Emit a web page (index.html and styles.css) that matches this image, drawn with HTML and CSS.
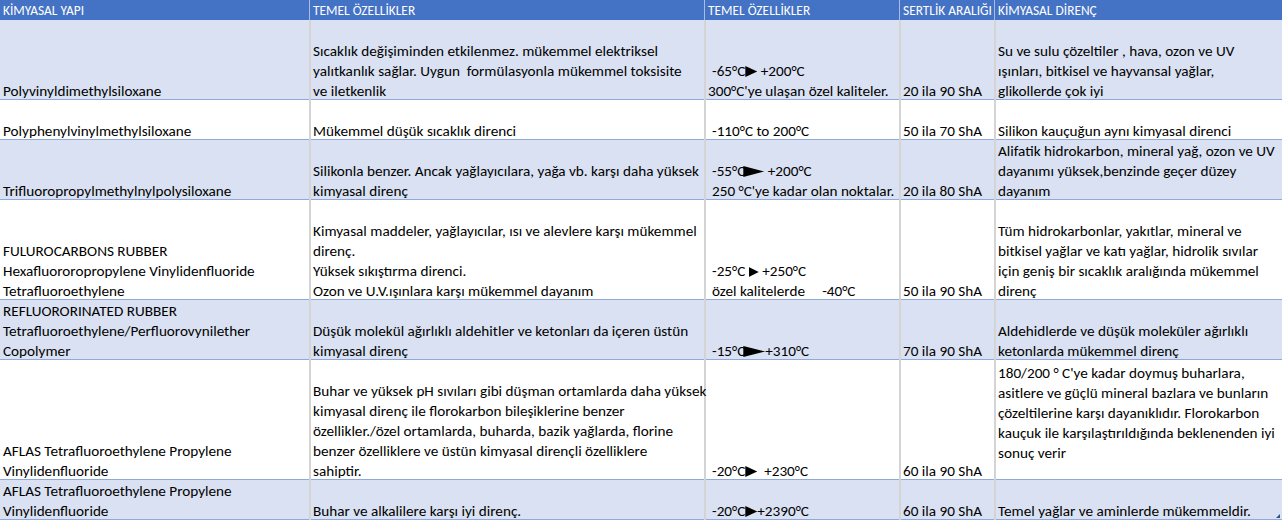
FILE: index.html
```html
<!DOCTYPE html>
<html lang="tr">
<head>
<meta charset="utf-8">
<title>Kimyasal Yapı</title>
<link rel="stylesheet" href="styles.css">
</head>
<body>
<div class="sheet">
  <div class="row head">
    <div class="cell c1">KİMYASAL YAPI</div>
    <div class="cell">TEMEL ÖZELLİKLER</div>
    <div class="cell">TEMEL ÖZELLİKLER</div>
    <div class="cell">SERTLİK ARALIĞI</div>
    <div class="cell last">KİMYASAL DİRENÇ</div>
  </div>

  <div class="row alt h4">
    <div class="cell c1">Polyvinyldimethylsiloxane</div>
    <div class="cell">Sıcaklık değişiminden etkilenmez. mükemmel elektriksel<br>yalıtkanlık sağlar. Uygun  formülasyonla mükemmel toksisite<br>ve iletkenlik</div>
    <div class="cell"><span><span class="sp"></span>-65°C<span class="arr"></span> +200°C</span><span>300°C'ye ulaşan özel kaliteler.</span></div>
    <div class="cell">20 ila 90 ShA</div>
    <div class="cell last">Su ve sulu çözeltiler , hava, ozon ve UV<br>ışınları, bitkisel ve hayvansal yağlar,<br>glikollerde çok iyi</div>
  </div>

  <div class="row h2">
    <div class="cell c1">Polyphenylvinylmethylsiloxane</div>
    <div class="cell">Mükemmel düşük sıcaklık direnci</div>
    <div class="cell"><span><span class="sp"></span>-110°C to 200°C</span></div>
    <div class="cell">50 ila 70 ShA</div>
    <div class="cell last">Silikon kauçuğun aynı kimyasal direnci</div>
  </div>

  <div class="row alt h3">
    <div class="cell c1">Trifluoropropylmethylnylpolysiloxane</div>
    <div class="cell">Silikonla benzer. Ancak yağlayıcılara, yağa vb. karşı daha yüksek<br>kimyasal direnç</div>
    <div class="cell"><span><span class="sp"></span>-55°C<span class="arr wide"></span> +200°C</span><span><span class="sp"></span>250 °C'ye kadar olan noktalar.</span></div>
    <div class="cell">20 ila 80 ShA</div>
    <div class="cell last">Alifatik hidrokarbon, mineral yağ, ozon ve UV<br>dayanımı yüksek,benzinde geçer düzey<br>dayanım</div>
  </div>

  <div class="row h5">
    <div class="cell c1">FULUROCARBONS RUBBER<br>Hexafluororopropylene Vinylidenfluoride<br>Tetrafluoroethylene</div>
    <div class="cell">Kimyasal maddeler, yağlayıcılar, ısı ve alevlere karşı mükemmel<br>direnç.<br>Yüksek sıkıştırma direnci.<br>Ozon ve U.V.ışınlara karşı mükemmel dayanım</div>
    <div class="cell"><span><span class="sp"></span>-25°C <span class="arr small"></span> +250°C</span><span><span class="sp"></span>özel kalitelerde     -40°C</span></div>
    <div class="cell">50 ila 90 ShA</div>
    <div class="cell last">Tüm hidrokarbonlar, yakıtlar, mineral ve<br>bitkisel yağlar ve katı yağlar, hidrolik sıvılar<br>için geniş bir sıcaklık aralığında mükemmel<br>direnç</div>
  </div>

  <div class="row alt h3">
    <div class="cell c1">REFLUORORINATED RUBBER<br>Tetrafluoroethylene/Perfluorovynilether<br>Copolymer</div>
    <div class="cell">Düşük molekül ağırlıklı aldehitler ve ketonları da içeren üstün<br>kimyasal direnç</div>
    <div class="cell"><span><span class="sp"></span>-15°C<span class="arr over"></span>+310°C</span></div>
    <div class="cell">70 ila 90 ShA</div>
    <div class="cell last">Aldehidlerde ve düşük moleküler ağırlıklı<br>ketonlarda mükemmel direnç</div>
  </div>

  <div class="row h6">
    <div class="cell c1">AFLAS Tetrafluoroethylene Propylene<br>Vinylidenfluoride</div>
    <div class="cell">Buhar ve yüksek pH sıvıları gibi düşman ortamlarda daha yüksek<br>kimyasal direnç ile florokarbon bileşiklerine benzer<br>özellikler./özel ortamlarda, buharda, bazik yağlarda, florine<br>benzer özelliklere ve üstün kimyasal dirençli özelliklere<br>sahiptir.</div>
    <div class="cell"><span><span class="sp"></span>-20°C<span class="arr"></span>  +230°C</span></div>
    <div class="cell">60 ila 90 ShA</div>
    <div class="cell last top">180/200 ° C'ye kadar doymuş buharlara,<br>asitlere ve güçlü mineral bazlara ve bunların<br>çözeltilerine karşı dayanıklıdır. Florokarbon<br>kauçuk ile karşılaştırıldığında beklenenden iyi<br>sonuç verir</div>
  </div>

  <div class="row alt h2 end">
    <div class="cell c1">AFLAS Tetrafluoroethylene Propylene<br>Vinylidenfluoride</div>
    <div class="cell">Buhar ve alkalilere karşı iyi direnç.</div>
    <div class="cell"><span><span class="sp"></span>-20°C<span class="arr"></span>+2390°C</span></div>
    <div class="cell">60 ila 90 ShA</div>
    <div class="cell last">Temel yağlar ve aminlerde mükemmeldir.</div>
  </div>
</div>
</body>
</html>
```
FILE: styles.css
```css
html, body {
  margin: 0;
  padding: 0;
  background: #ffffff;
}

body {
  font-family: Carlito, Calibri, "Liberation Sans", sans-serif;
  font-size: 15.2px;
  color: #000000;
}

.sheet {
  width: 1282px;
  display: flex;
  flex-direction: column;
}

.row {
  display: grid;
  grid-template-columns: 311px 395px 195px 95px 1fr;
  box-sizing: border-box;
  border-bottom: 1px solid #8ea9db;
  background: #ffffff;
  position: relative;
}

.row.alt { background: #d9e1f2; }

.row.h2 { height: 40px; }
.row.h3 { height: 60px; }
.row.h4 { height: 80px; }
.row.h5 { height: 100px; }
.row.h6 { height: 120px; }

.cell {
  display: flex;
  flex-direction: column;
  justify-content: flex-end;
  box-sizing: border-box;
  padding: 0 1px 0 2px;
  margin-bottom: -2px;
  border-right: 2px solid #d4d4d4;
  line-height: 20px;
  white-space: pre;
}

.cell.c1 { padding-left: 3px; }
.cell.last { border-right: none; }
.cell.top { justify-content: flex-start; padding-top: 3px; }

.row.head {
  height: 20px;
  background: #4472c4;
  border-bottom: none;
}

.row.head .cell {
  color: #ffffff;
  font-size: 13.4px;
  justify-content: center;
  margin-bottom: 0;
  padding-top: 1px;
  border-right: 1px solid #a9bde4;
  margin-right: 1px;
}

.row.head .cell.last { border-right: none; margin-right: 0; }

.sp {
  display: inline-block;
  width: 4px;
}

.arr {
  display: inline-block;
  width: 12px;
  height: 11px;
  background: #000000;
  clip-path: polygon(0 0, 100% 50%, 0 100%);
  vertical-align: -1px;
}

.arr.wide {
  width: 21px;
  margin-left: -2px;
}

.arr.small {
  width: 10px;
  height: 10px;
}

.arr.over {
  width: 22px;
  margin-left: -2px;
}

.row.end::after {
  content: "";
  position: absolute;
  right: 2px;
  bottom: 1px;
  width: 4px;
  height: 4px;
  background: #2f4f8f;
  clip-path: polygon(100% 0, 100% 100%, 0 100%);
}
```
